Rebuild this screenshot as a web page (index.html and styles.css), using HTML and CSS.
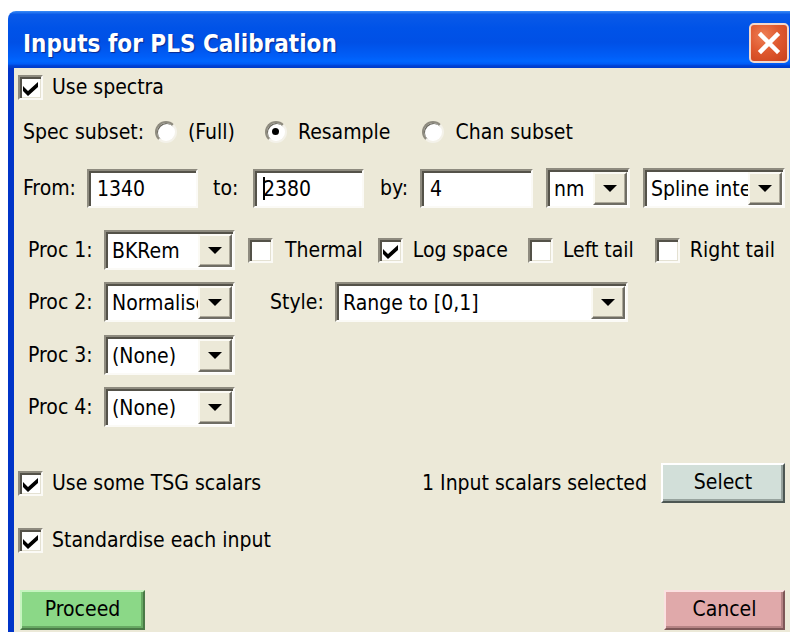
FILE: index.html
```html
<!DOCTYPE html>
<html lang="en">
<head>
<meta charset="utf-8">
<title>Inputs for PLS Calibration</title>
<link rel="stylesheet" href="styles.css">
</head>
<body>
<div class="window">
  <div class="titlebar">
    <span class="title">Inputs for PLS Calibration</span>
    <span class="close" title="Close">
      <svg width="36" height="36" viewBox="0 0 36 36" aria-hidden="true">
        <path d="M10 10 L26 26 M26 10 L10 26" stroke="#fff" stroke-width="4.5" stroke-linecap="square" fill="none"/>
      </svg>
    </span>
  </div>

  <div class="client">
    <div class="row r1">
      <label class="check"><span class="box"><svg viewBox="0 0 21 21"><path d="M3 9 L8 14 L18 5 L18 10 L8 19 L3 14 Z"/></svg></span>Use spectra</label>
    </div>

    <div class="row r2">
      <span class="lbl lbl-subset">Spec subset:</span>
      <label class="radio"><span class="ring"></span>(Full)</label>
      <label class="radio r-resample"><span class="ring on"></span>Resample</label>
      <label class="radio r-chan"><span class="ring"></span>Chan subset</label>
    </div>

    <div class="row r3">
      <span class="lbl lbl-from">From:</span>
      <span class="field edit w-edit">1340</span>
      <span class="lbl lbl-to">to:</span>
      <span class="field edit w-edit"><span class="caret"></span>2380</span>
      <span class="lbl lbl-by">by:</span>
      <span class="field edit w-by">4</span>
      <span class="field combo w-unit"><span class="val">nm</span><span class="drop"></span></span>
      <span class="field combo w-interp"><span class="val">Spline inter</span><span class="drop"></span></span>
    </div>

    <div class="row r4">
      <span class="lbl lbl-proc">Proc 1:</span>
      <span class="field combo w-proc"><span class="val">BKRem</span><span class="drop"></span></span>
      <label class="check opt opt-thermal"><span class="box off"></span>Thermal</label>
      <label class="check opt opt-log"><span class="box"><svg viewBox="0 0 21 21"><path d="M3 9 L8 14 L18 5 L18 10 L8 19 L3 14 Z"/></svg></span>Log space</label>
      <label class="check opt opt-left"><span class="box off"></span>Left tail</label>
      <label class="check opt opt-right"><span class="box off"></span>Right tail</label>
    </div>

    <div class="row r5">
      <span class="lbl lbl-proc">Proc 2:</span>
      <span class="field combo w-proc"><span class="val">Normalise</span><span class="drop"></span></span>
      <span class="lbl lbl-style">Style:</span>
      <span class="field combo w-style"><span class="val">Range to [0,1]</span><span class="drop"></span></span>
    </div>

    <div class="row r6">
      <span class="lbl lbl-proc">Proc 3:</span>
      <span class="field combo w-proc"><span class="val">(None)</span><span class="drop"></span></span>
    </div>

    <div class="row r7">
      <span class="lbl lbl-proc">Proc 4:</span>
      <span class="field combo w-proc"><span class="val">(None)</span><span class="drop"></span></span>
    </div>

    <div class="row r8">
      <label class="check"><span class="box"><svg viewBox="0 0 21 21"><path d="M3 9 L8 14 L18 5 L18 10 L8 19 L3 14 Z"/></svg></span>Use some TSG scalars</label>
      <span class="status">1 Input scalars selected</span>
      <button class="btn btn-select" type="button">Select</button>
    </div>

    <div class="row r9">
      <label class="check"><span class="box"><svg viewBox="0 0 21 21"><path d="M3 9 L8 14 L18 5 L18 10 L8 19 L3 14 Z"/></svg></span>Standardise each input</label>
    </div>

    <div class="row r10">
      <button class="btn btn-proceed" type="button">Proceed</button>
      <button class="btn btn-cancel" type="button">Cancel</button>
    </div>
  </div>
</div>
</body>
</html>
```

FILE: styles.css
```css
html, body {
  margin: 0;
  padding: 0;
  background: #ffffff;
}

body {
  width: 790px;
  height: 632px;
  overflow: hidden;
}

/* ---- window frame ---- */
.window {
  margin: 11px 0 0 8px;
  width: 782px;
  height: 621px;
  display: flex;
  flex-direction: column;
}

.titlebar {
  height: 57px;
  flex: none;
  box-sizing: border-box;
  border-radius: 8px 0 0 0;
  background: linear-gradient(to bottom,
    #3a8cf6 0%, #0a5ae8 6%, #0053e8 30%, #0050e6 55%,
    #005ef8 80%, #0066ff 88%, #005bf6 93%, #0042d4 96%, #003ac8 100%);
  display: flex;
  align-items: center;
  padding: 0 1px 0 15px;
}

.title {
  font-family: "DejaVu Sans Condensed", "DejaVu Sans", sans-serif;
  font-stretch: condensed;
  font-weight: bold;
  font-size: 24px;
  color: #ffffff;
  text-shadow: 1px 1px 1px #0b2a8e;
  padding-top: 9px;
}

.close {
  margin-left: auto;
  margin-top: 6px;
  width: 40px;
  height: 40px;
  box-sizing: border-box;
  border: 2px solid #f3d8cc;
  border-radius: 5px;
  background: radial-gradient(circle at 35% 30%, #ee7f55 0%, #e05a30 45%, #c9401a 100%);
  display: flex;
  align-items: center;
  justify-content: center;
}

.close svg { display: block; }

/* ---- client area ---- */
.client {
  flex: 1;
  background: #ece9d8;
  border-left: 6px solid #0553e8;
  border-image: linear-gradient(to right, #0034c8 0%, #0a5cf0 45%, #0b60f4 75%, #0847d8 100%) 1;
  padding: 4px 5px 0 0;
  font-family: "DejaVu Sans Condensed", "Liberation Sans", sans-serif;
  font-stretch: condensed;
  font-size: 21px;
  color: #000;
  display: flex;
  flex-direction: column;
}

.row {
  display: flex;
  align-items: center;
  flex: none;
}

.r1  { height: 30px; padding-left: 4px; }
.r2  { height: 30px; margin-top: 15px; padding-left: 9px; }
.r3  { height: 40px; margin-top: 21px; padding-left: 9px; }
.r4  { height: 40px; margin-top: 22px; padding-left: 14px; }
.r5  { height: 40px; margin-top: 12px; padding-left: 14px; }
.r6  { height: 40px; margin-top: 13px; padding-left: 14px; }
.r7  { height: 40px; margin-top: 12px; padding-left: 14px; }
.r8  { height: 40px; margin-top: 36px; padding-left: 4px; }
.r9  { height: 30px; margin-top: 22px; padding-left: 4px; }
.r10 { height: 40px; margin-top: 35px; padding-left: 6px; justify-content: space-between; }

.lbl { white-space: nowrap; flex: none; }
.lbl-subset { width: 132px; }
.lbl-from   { width: 64px; }
.lbl-to     { width: 40px; margin-left: 15px; }
.lbl-by     { width: 40px; margin-left: 16px; }
.lbl-proc   { width: 76px; }
.lbl-style  { width: 65px; margin-left: 35px; }

/* ---- check boxes ---- */
.check {
  display: flex;
  align-items: center;
  white-space: nowrap;
}

.box {
  width: 25px;
  height: 25px;
  box-sizing: border-box;
  flex: none;
  margin-right: 9px;
  background: #fff;
  border: 2px solid;
  border-color: #8e8b7f #fbfaf6 #fbfaf6 #8e8b7f;
  box-shadow: inset 2px 2px 0 #545249, inset -1px -1px 0 #e4e1d2;
  display: flex;
  align-items: center;
  justify-content: center;
}

.box svg {
  width: 21px;
  height: 21px;
  display: block;
}

.box svg path { fill: #000; }

.opt { margin-left: 13px; }
.opt .box { margin-right: 10px; }
.opt-thermal .box { margin-right: 12px; }
.opt-log   { margin-left: 15px; }
.opt-left  { margin-left: 20px; }
.opt-right { margin-left: 21px; }

/* ---- radio buttons ---- */
.radio {
  display: flex;
  align-items: center;
  white-space: nowrap;
}

.r-resample { margin-left: 30px; }
.r-chan     { margin-left: 32px; }

.ring {
  width: 22px;
  height: 22px;
  box-sizing: border-box;
  flex: none;
  margin-right: 11px;
  border-radius: 50%;
  background: #fff;
  border: 2px solid;
  border-color: #8e8b7f #f4f2ea #f4f2ea #8e8b7f;
  box-shadow: inset 1px 1px 0 #6a685f;
  position: relative;
}

.ring.on::after {
  content: "";
  position: absolute;
  left: 5px;
  top: 5px;
  width: 7px;
  height: 7px;
  border-radius: 50%;
  background: #000;
}

/* ---- sunken fields ---- */
.field {
  height: 40px;
  box-sizing: border-box;
  flex: none;
  background: #fff;
  border: 2px solid;
  border-color: #8e8b7f #fbfaf6 #fbfaf6 #8e8b7f;
  box-shadow: inset 2px 2px 0 #545249;
  padding: 2px 1px 1px 2px;
  display: flex;
  align-items: center;
  overflow: hidden;
  white-space: nowrap;
}

.edit { height: 39px; padding-left: 8px; }
.w-edit { width: 111px; }
.w-by   { width: 113px; }
.w-unit { width: 84px;  margin-left: 13px; }
.w-interp { width: 142px; margin-left: 13px; }
.w-proc { width: 131px; }
.w-style { width: 293px; }

.caret {
  width: 2px;
  height: 23px;
  background: #000;
  margin-right: -2px;
  flex: none;
}

.combo .val {
  flex: 1;
  min-width: 0;
  overflow: hidden;
  padding-left: 4px;
}

.drop {
  width: 34px;
  align-self: stretch;
  flex: none;
  box-sizing: border-box;
  background: #ece9d8;
  border: 2px solid;
  border-color: #fbfaf4 #6f6d64 #6f6d64 #fbfaf4;
  box-shadow: inset -1px -1px 0 #aca899;
  display: flex;
  align-items: center;
  justify-content: center;
}

.drop::before {
  content: "";
  width: 0;
  height: 0;
  border-left: 7px solid transparent;
  border-right: 7px solid transparent;
  border-top: 7px solid #000;
}

/* ---- push buttons ---- */
.status {
  margin-left: auto;
  white-space: nowrap;
}

.btn {
  font: inherit;
  color: #000;
  height: 40px;
  box-sizing: border-box;
  border: 2px solid;
  padding: 0 0 2px 0;
  flex: none;
}

.btn-select {
  width: 124px;
  margin-left: 14px;
  background: #d2dfd9;
  border-color: #ffffff #4d5753 #4d5753 #ffffff;
  box-shadow: inset -2px -2px 0 #97a39e;
}

.btn-proceed {
  width: 125px;
  background: #8bd887;
  border-color: #c6f4bf #4a7a47 #4a7a47 #c6f4bf;
  box-shadow: inset -2px -2px 0 #67a963;
}

.btn-cancel {
  width: 121px;
  background: #e0a9aa;
  border-color: #fbe1e1 #7e5757 #7e5757 #fbe1e1;
  box-shadow: inset -2px -2px 0 #b58384;
}
```
